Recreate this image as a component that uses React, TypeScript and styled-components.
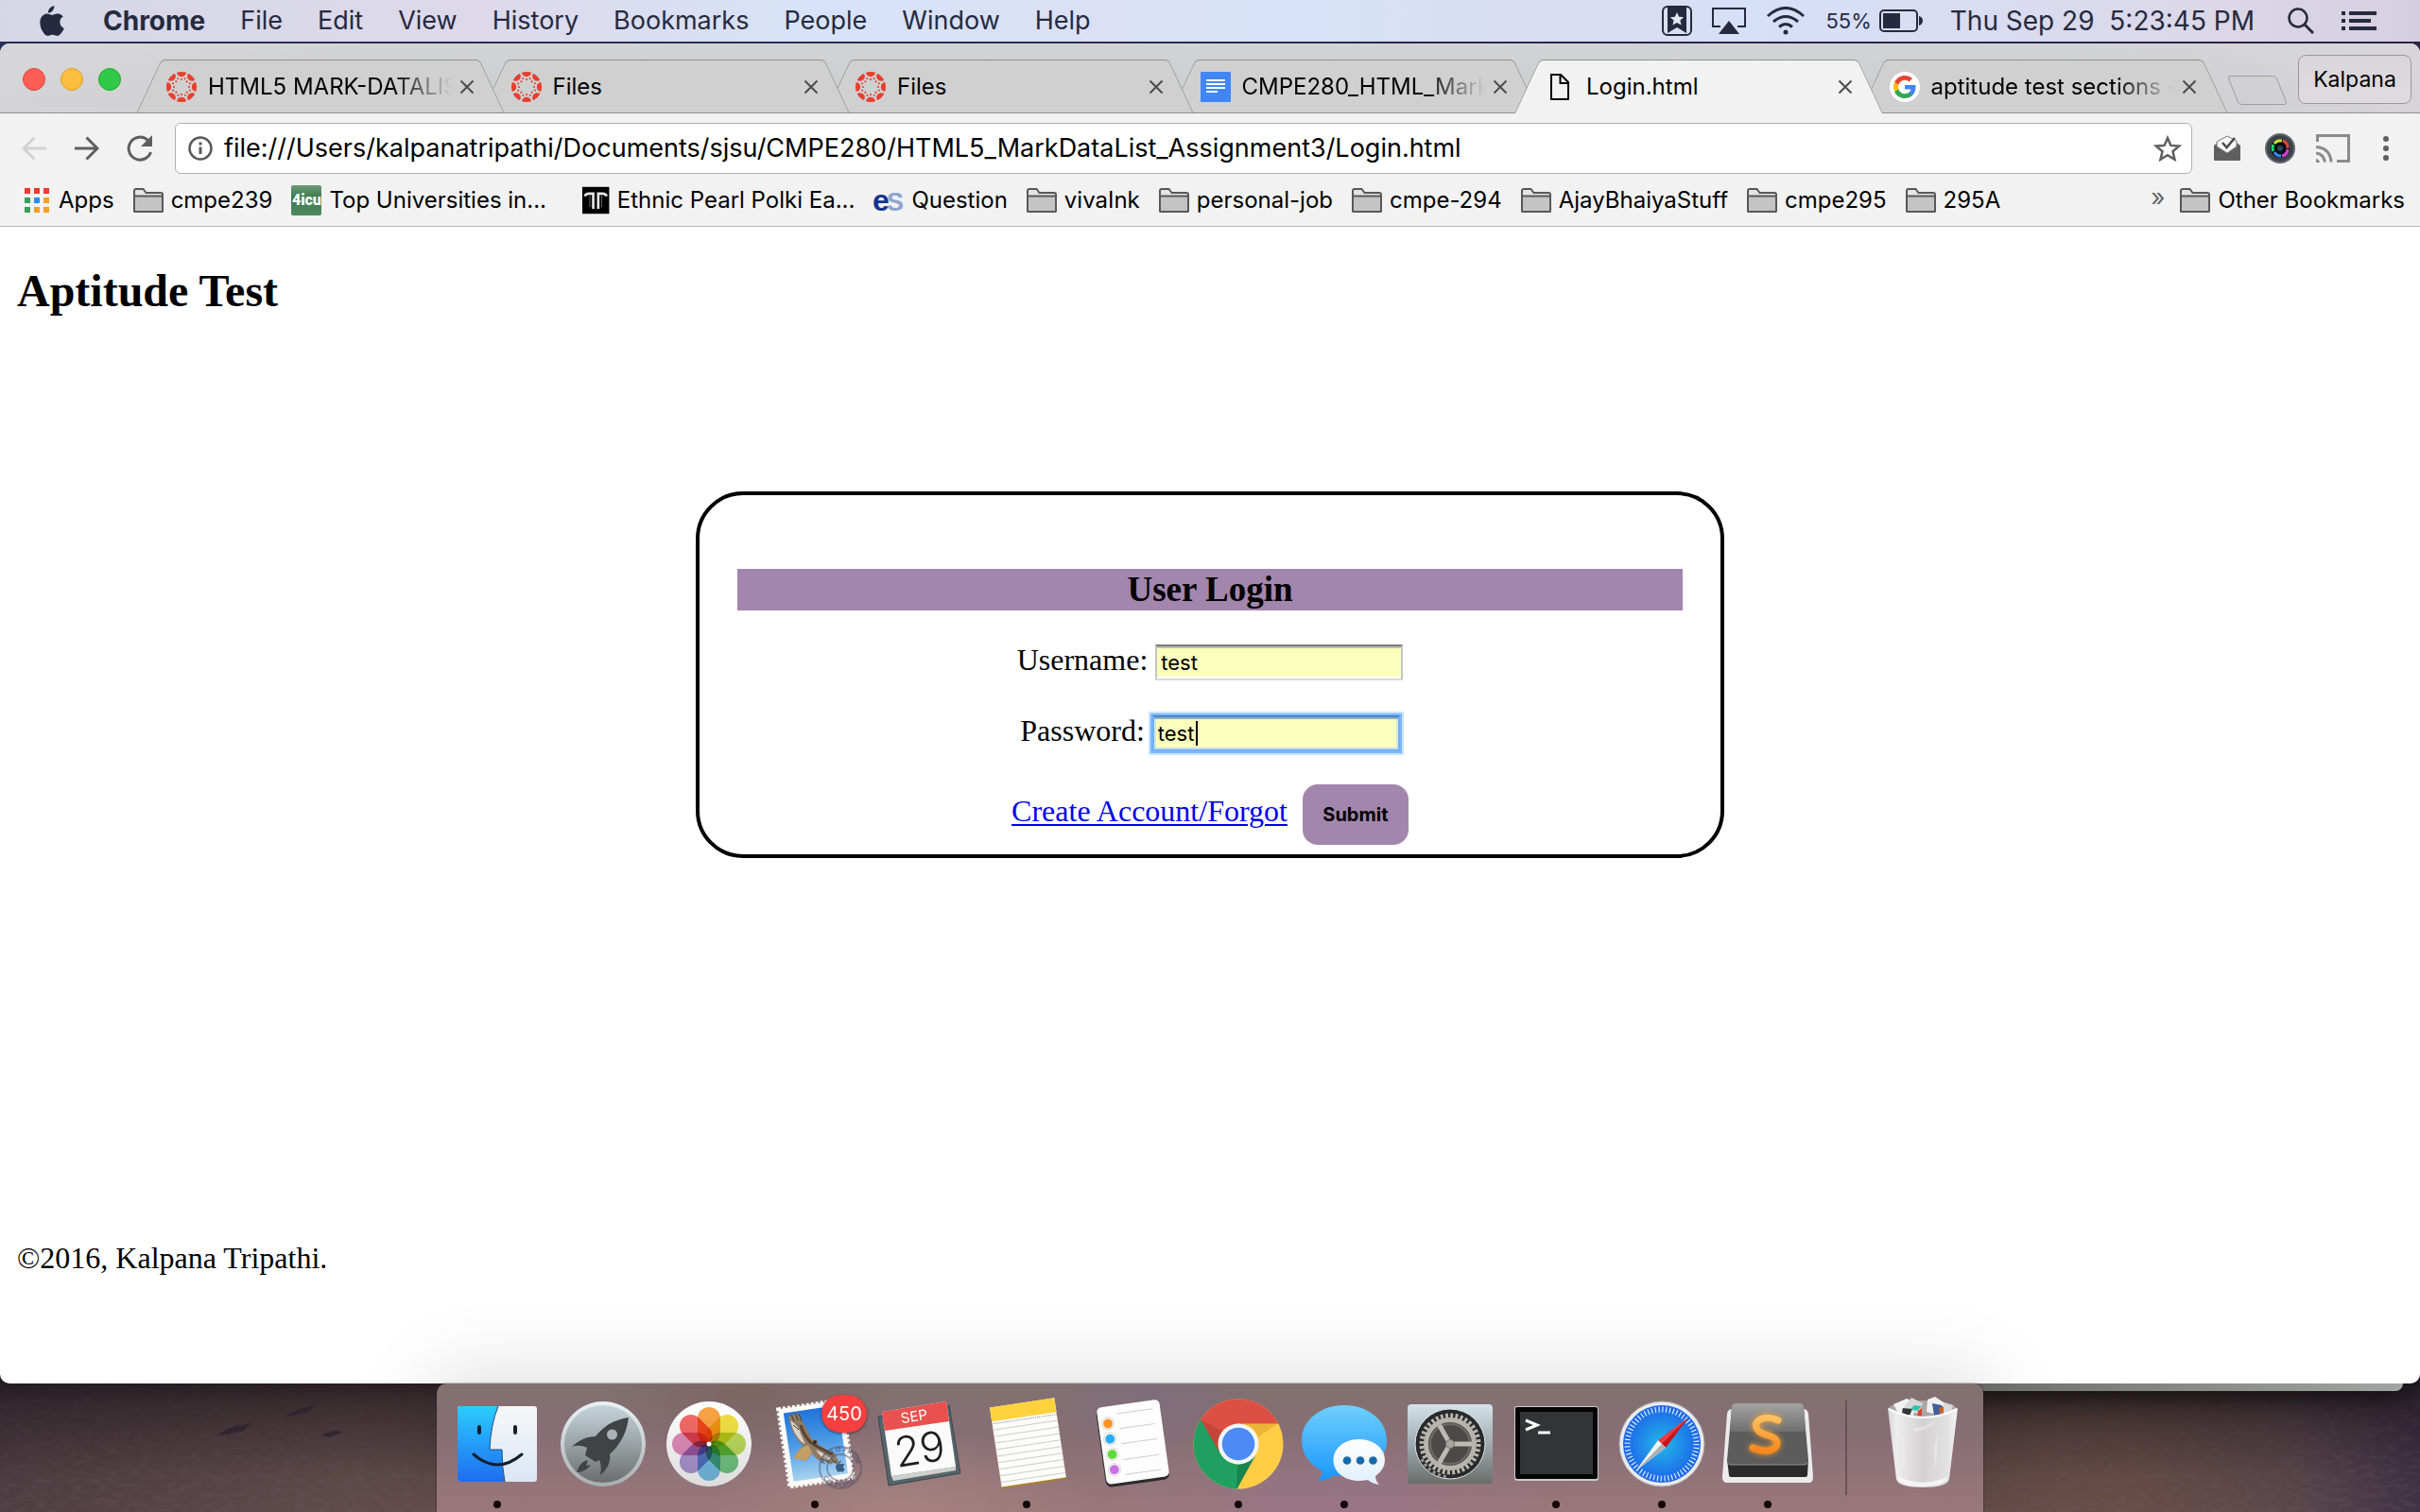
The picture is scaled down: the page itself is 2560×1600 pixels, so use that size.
import React from 'react';
import styled, { createGlobalStyle, css } from 'styled-components';

const GlobalStyle = createGlobalStyle`
  *, *::before, *::after { box-sizing: border-box; }
  body { margin: 0; background: #3b3036; }
  button, input { font-family: inherit; }
  button { padding: 0; border: 0; background: none; color: inherit; }
`;

const ui = 'Inter, "Liberation Sans", sans-serif';
const serif = '"Liberation Serif", "Times New Roman", serif';
const ink = '#262a3e';

/* ---------- desktop ---------- */

const Desktop = styled.div`
  position: relative;
  isolation: isolate;
  min-height: 100vh;
  display: grid;
  grid-template-rows: auto 1fr auto;
  overflow: hidden;
  font-family: ${ui};
  background: linear-gradient(90deg, #27305a, #2a2c54 50%, #2c2246);
`;

const Wallpaper = styled.svg`
  position: absolute;
  left: 0;
  bottom: 0;
  z-index: -1;
  width: 100%;
  height: 150px;
`;

/* ---------- menu bar ---------- */

const MenuBar = styled.header`
  display: flex;
  align-items: center;
  justify-content: space-between;
  height: 44px;
  padding: 0 46px 0 42px;
  color: ${ink};
  background: linear-gradient(90deg, #d5d7e7, #ddd9ea 20%, #d7e3f9 34%, #dbe0f5 46%, #d6e3f8 53%, #dadcf0 66%, #d6e0f8 72%, #dadbf0 84%, #dbd7e6 92%, #d6cfdf);
`;

const MenuGroup = styled.nav`
  display: flex;
  align-items: center;
  gap: 37px;
`;

const AppleButton = styled.button`
  display: flex;
  margin-right: 4px;
`;

const MenuItem = styled.button<{ $bold?: boolean }>`
  font-size: ${p => (p.$bold ? 28 : 27)}px;
  font-weight: ${p => (p.$bold ? 700 : 400)};
  line-height: 44px;
`;

const StatusGroup = styled.div`
  display: flex;
  align-items: center;
  gap: 21px;
`;

const Battery = styled.span`
  display: flex;
  align-items: center;
  gap: 8px;
  font-size: 22px;
`;

const Clock = styled.time`
  margin: 0 14px 0 8px;
  font-size: 28px;
  white-space: pre;
`;

const StatusButton = styled.button`
  display: flex;
  margin-right: 8px;
  &:last-child { margin-right: 0; }
`;

/* ---------- browser window ---------- */

const WindowArea = styled.div`
  position: relative;
  display: flex;
  margin-top: 2px;
`;

const BackWindow = styled.div`
  position: absolute;
  right: 18px;
  bottom: -8px;
  width: 60%;
  height: 40px;
  border-radius: 8px;
  background: linear-gradient(90deg, #555 30%, #6a6d6a 70%, #a2a6a2);
  box-shadow: 0 6px 30px rgba(0, 0, 0, 0.6);
`;

const Window = styled.main`
  position: relative;
  flex: 1;
  min-width: 0;
  display: flex;
  flex-direction: column;
  overflow: hidden;
  border-radius: 10px;
  background: #fff;
`;

const TabStrip = styled.div`
  position: relative;
  display: flex;
  align-items: flex-end;
  height: 74px;
  padding: 0 9px 0 24px;
  background: linear-gradient(90deg, rgba(220, 218, 220, 0.5), rgba(205, 207, 212, 0) 20%, rgba(205, 207, 212, 0) 85%, rgba(220, 216, 220, 0.6)), linear-gradient(#d2d3d6, #cbccd1);
  isolation: isolate;
  &::after {
    content: '';
    position: absolute;
    left: 0;
    right: 0;
    bottom: 0;
    z-index: 8;
    height: 1px;
    background: #8f8f8f;
  }
`;

const Lights = styled.div`
  display: flex;
  align-self: center;
  gap: 16px;
  margin: 2px 16px 0 0;
`;

const Light = styled.button<{ $fill: string; $edge: string }>`
  width: 24px;
  height: 24px;
  border-radius: 50%;
  border: 1px solid ${p => p.$edge};
  background: ${p => p.$fill};
`;

const Tabs = styled.div`
  display: flex;
  flex: 0 1 2187px;
  min-width: 0;
`;

const halfTab = css`
  content: '';
  position: absolute;
  top: 0;
  bottom: 0;
  z-index: -1;
  border-top: 1px solid #8f8f8f;
`;

const Tab = styled.div<{ $active: boolean; $order: number }>`
  position: relative;
  z-index: ${p => (p.$active ? 9 : 7 - p.$order)};
  flex: 1 1 391px;
  min-width: 0;
  height: 57px;
  margin-right: -26px;
  padding: 0 33px 0 32px;
  display: flex;
  align-items: center;
  gap: 8px;
  &::before {
    ${halfTab}
    left: 0;
    right: 50%;
    border-left: 1px solid #8f8f8f;
    border-top-left-radius: 5px;
    transform: skewX(-25deg);
    transform-origin: bottom left;
    background: ${p => (p.$active ? '#f2f2f2' : '#d0d0d0')};
  }
  &::after {
    ${halfTab}
    left: 50%;
    right: 0;
    margin-left: -1px;
    border-right: 1px solid #8f8f8f;
    border-top-right-radius: 5px;
    transform: skewX(25deg);
    transform-origin: bottom right;
    background: ${p => (p.$active ? '#f2f2f2' : '#d0d0d0')};
  }
`;

const TabTitle = styled.span<{ $fade: boolean }>`
  flex: 1;
  min-width: 0;
  margin-left: 4px;
  overflow: hidden;
  white-space: nowrap;
  font-size: 24px;
  line-height: 32px;
  ${p => p.$fade && css`mask-image: linear-gradient(90deg, #000 calc(100% - 64px), transparent);`}
`;

const CloseButton = styled.button`
  display: flex;
`;

const NewTab = styled.button`
  flex: none;
  width: 52px;
  height: 31px;
  margin: 0 12px 9px 31px;
  border: 1px solid #9c9ca0;
  border-radius: 4px;
  background: rgba(208, 208, 208, 0.5);
  transform: skewX(22deg);
`;

const Profile = styled.button`
  flex: none;
  width: 120px;
  height: 52px;
  margin: 0 0 10px auto;
  border: 1px solid #98989c;
  border-radius: 8px;
  background: linear-gradient(#d8d6da, #dedcdf);
  font-size: 23px;
`;

const Toolbar = styled.div`
  display: flex;
  align-items: center;
  height: 74px;
  padding: 0 8px;
  background: #f2f2f2;
`;

const ToolButton = styled.button`
  flex: none;
  display: flex;
  align-items: center;
  justify-content: center;
  width: 56px;
  height: 56px;
`;

const Omnibox = styled.div`
  flex: 1;
  min-width: 0;
  display: flex;
  align-items: center;
  gap: 12px;
  height: 54px;
  margin: 0 9px;
  padding: 0 10px 0 13px;
  border: 1px solid #b0b0b0;
  border-radius: 6px;
  background: #fff;
`;

const Address = styled.input`
  flex: 1;
  min-width: 0;
  padding: 0;
  border: 0;
  outline: 0;
  background: none;
  color: #000;
  font-size: 27px;
  line-height: 36px;
`;

const BookmarkBar = styled.nav`
  display: flex;
  align-items: center;
  gap: 20px;
  height: 46px;
  padding: 0 16px 9px 24px;
  background: #f2f2f2;
  border-bottom: 1px solid #b6b6b6;
`;

const Bookmark = styled.a<{ $fixed?: boolean }>`
  display: flex;
  align-items: center;
  gap: 8px;
  flex: none;
  ${p => p.$fixed && css`width: 288px;`}
  color: #000;
  font-size: 24px;
  line-height: 32px;
  white-space: nowrap;
  text-decoration: none;
`;

const MoreButton = styled.button`
  margin: 0 -4px 6px auto;
  color: #666;
  font-size: 26px;
  line-height: 26px;
`;

const TileIcon = styled.span<{ $bg: string }>`
  display: flex;
  align-items: center;
  justify-content: center;
  width: 32px;
  height: 32px;
  border-radius: 2px;
  color: #fff;
  background: ${p => p.$bg};
  font: 900 16px/32px Roboto, sans-serif;
`;

/* ---------- login page ---------- */

const Page = styled.section`
  flex: 1;
  padding: 40px 18px 0;
  font-family: ${serif};
  font-size: 32px;
  line-height: 36px;
  color: #000;
`;

const PageTitle = styled.h1`
  margin: 0;
  font-size: 48px;
  line-height: 56px;
`;

const Card = styled.form`
  max-width: 1088px;
  margin: 184px auto 0;
  padding: 78px 40px 10px;
  border: 4px solid #000;
  border-radius: 50px;
`;

const CardTitle = styled.h2`
  margin: 0 0 34px;
  background: #a386ad;
  text-align: center;
  font-size: 37px;
  line-height: 44px;
`;

const FormRow = styled.div`
  display: flex;
  justify-content: center;
  align-items: baseline;
  gap: 8px;
  margin-bottom: 35px;
`;

const ActionRow = styled(FormRow)`
  gap: 16px;
  margin-bottom: 0;
`;

const Field = styled.div`
  position: relative;
`;

const TextInput = styled.input<{ $focused?: boolean }>`
  display: block;
  width: 262px;
  height: 38px;
  padding: 0 4px;
  border: 2px solid #c6c6c6;
  border-top-color: #7a7a7a;
  border-bottom-color: #d8d8d8;
  outline: 0;
  background: #faffbd;
  box-shadow: inset 0 2px #bdbfa8, inset 0 -2px #fff;
  color: #000;
  font-family: ${ui};
  font-size: 22px;
  caret-color: transparent;
  ${p => p.$focused && css`
    border-color: #6fb1f6;
    border-top-color: #4c86c6;
    box-shadow: inset 0 2px #8fb0cc, inset 0 -2px #c5def0, inset 2px 0 #d8e8dc, inset -2px 0 #d8e8dc, 0 0 0 2px #7cb9fb, 0 0 0 4px #c9e2fe;
  `}
`;

const Caret = styled.span`
  position: absolute;
  left: 46px;
  top: 6px;
  width: 2px;
  height: 26px;
  background: #000;
`;

const AccountLink = styled.a`
  color: #0000ee;
  text-decoration: underline;
  text-decoration-thickness: 2px;
  text-underline-offset: 3px;
`;

const Submit = styled.button`
  width: 112px;
  height: 64px;
  border-radius: 16px;
  background: #a386ad;
  font-family: ${ui};
  font-size: 20px;
  font-weight: 700;
`;

const Copyright = styled.p`
  margin: 405px 0 0;
`;

/* ---------- dock ---------- */

const DockBar = styled.footer`
  display: flex;
  justify-content: center;
`;

const Dock = styled.div`
  position: relative;
  z-index: 2;
  display: flex;
  height: 136px;
  padding: 0 8px;
  border-radius: 10px 10px 0 0;
  background:
    radial-gradient(ellipse 200px 90px at 30% 100%, rgba(170, 134, 128, 0.7), transparent),
    radial-gradient(ellipse 260px 80px at 58% 95%, rgba(150, 115, 140, 0.6), transparent),
    radial-gradient(ellipse 120px 60px at 46% 10%, rgba(125, 108, 128, 0.7), transparent),
    radial-gradient(ellipse 160px 70px at 20% 10%, rgba(120, 98, 94, 0.7), transparent),
    linear-gradient(#82706f, #876e75 40%, #9a787b);
  box-shadow: 0 0 2px rgba(0, 0, 0, 0.7), 0 -6px 80px 8px rgba(0, 0, 0, 0.12);
`;

const DockItem = styled.button`
  position: relative;
  width: 112px;
  padding-top: 14px;
  display: flex;
  flex-direction: column;
  align-items: center;
  gap: 10px;
  svg { display: block; overflow: visible; }
`;

const RunningDot = styled.span`
  width: 8px;
  height: 8px;
  border-radius: 50%;
  background: #140406;
`;

const Badge = styled.span`
  position: absolute;
  left: 63px;
  top: 12px;
  width: 48px;
  height: 40px;
  border-radius: 20px;
  background: #f5403f;
  box-shadow: 0 1px 3px rgba(0, 0, 0, 0.5);
  color: #fff;
  text-align: center;
  font-size: 20px;
  line-height: 40px;
`;

const Separator = styled.span`
  width: 2px;
  margin: 18px 24px 18px 26px;
  background: #6d5054;
`;

/* ---------- small icons ---------- */

const CanvasIcon = ({ id }: { id: string }) => (
  <svg width="32" height="32" viewBox="-16 -16 32 32">
    <clipPath id={id}><circle r="16" /></clipPath>
    <g fill="#e83f2e">
      <g clipPath={`url(#${id})`}>
        {[0, 45, 90, 135, 180, 225, 270, 315].map(a => (
          <ellipse key={a} cx="0" cy="-15.6" rx="5" ry="4.8" transform={`rotate(${a})`} />
        ))}
      </g>
      {[0, 45, 90, 135, 180, 225, 270, 315].map(a => (
        <circle key={a} cy="-8" r="1.1" transform={`rotate(${a})`} />
      ))}
      {[22, 67, 112, 157, 202, 247, 292, 337].map(a => (
        <circle key={a} cy="-9.6" r="1" transform={`rotate(${a})`} />
      ))}
    </g>
  </svg>
);

const DocsIcon = () => (
  <svg width="32" height="32" viewBox="0 0 32 32">
    <rect width="32" height="32" rx="1" fill="#4285f4" />
    <path d="M6 9h20M6 13h20M6 17h20M6 21h12" stroke="#fff" strokeWidth="2" />
  </svg>
);

const PageIcon = () => (
  <svg width="32" height="32" viewBox="0 0 32 32" fill="none" stroke="#000" strokeWidth="2">
    <path d="M7 3h10l8 8v18H7zM16.500 3v9H25" />
  </svg>
);

const GoogleIcon = () => (
  <svg width="32" height="32" viewBox="0 0 32 32">
    <circle cx="16" cy="16" r="16" fill="#fff" />
    <g transform="translate(4 4)">
      <path fill="#4285f4" d="M23.500 12.300c0-.8-.1-1.600-.2-2.300H12v4.500h6.500c-.3 1.500-1.100 2.700-2.400 3.600v3h3.900c2.200-2.100 3.500-5.100 3.500-8.800z" />
      <path fill="#34a853" d="M12 24c3.200 0 6-1.100 8-2.900l-3.900-3c-1.100.7-2.500 1.200-4.100 1.200-3.100 0-5.800-2.100-6.700-5H1.200v3.100C3.300 21.300 7.300 24 12 24z" />
      <path fill="#fbbc05" d="M5.300 14.300c-.5-1.500-.5-3.100 0-4.600V6.600H1.200c-1.600 3.400-1.600 7.400 0 10.800z" />
      <path fill="#ea4335" d="M12 4.800c1.800 0 3.300.6 4.600 1.800L20 3.100C17.900 1.200 15.200 0 12 0 7.300 0 3.300 2.700 1.200 6.600l4.100 3.100c.9-2.800 3.600-4.900 6.700-4.900z" />
    </g>
  </svg>
);

const CloseIcon = () => (
  <svg width="16" height="16" viewBox="0 0 16 16" stroke="#4c4c4c" strokeWidth="2"><path d="M1.500 1.500l13 13M14.500 1.500l-13 13" /></svg>
);

const FolderIcon = () => (
  <svg width="32" height="26" viewBox="0 0 32 26" fill="#c4c4c4" stroke="#58585a" strokeWidth="2">
    <path d="M1 24V3q0-2 2-2h7.500l3 4H29q2 0 2 2v17q0 1-1 1H2q-1 0-1-1z" fill="#e4e4e4" />
    <path d="M1 8.500h30V24q0 1-1 1H2q-1 0-1-1z" />
  </svg>
);

const AppsIcon = () => (
  <svg width="30" height="26" viewBox="0 0 30 26">
    {['#f2382f', '#f2382f', '#f2382f', '#389e5b', '#2390f5', '#f3a024', '#389e5b', '#f3a024', '#f3a024'].map((c, i) => (
      <rect key={i} x={2 + (i % 3) * 10} y={Math.floor(i / 3) * 10} width="6" height="6" fill={c} />
    ))}
  </svg>
);

const EsIcon = () => (
  <svg width="32" height="32" viewBox="0 0 32 32" fontFamily="Liberation Sans" fontWeight="700">
    <text x="14" y="27" fontSize="27" fill="#8ea4cf">S</text>
    <text x="-1" y="27" fontSize="32" fill="#12348f">e</text>
  </svg>
);

const PearlIcon = () => (
  <svg width="32" height="32" viewBox="0 0 32 32" fill="none" stroke="#e6e6e6">
    <rect width="32" height="32" fill="#000" stroke="none" />
    <path d="M3 11q1-3 5-3h5v18" strokeWidth="3" />
    <path d="M29 11q-1-3-5-3h-5v18" strokeWidth="3" />
    <path d="M9 10v14M23 10v14" strokeWidth="1" stroke="#777" />
  </svg>
);

const favicons: Record<string, (key: string) => React.ReactNode> = {
  canvas: key => <CanvasIcon id={key} />,
  docs: () => <DocsIcon />,
  page: () => <PageIcon />,
  google: () => <GoogleIcon />,
};

const applePath = 'M19.700 18.600c-.8 1.200-1.700 2.400-3 2.500-1.300 0-1.700-.8-3.300-.8-1.500 0-2 .7-3.200.8-1.300 0-2.300-1.300-3.100-2.500C5.400 16.200 4.100 11.700 5.800 8.700c.9-1.500 2.400-2.400 4-2.500 1.300 0 2.500.9 3.300.9.800 0 2.300-1.100 3.800-.9.600 0 2.500.3 3.600 2-.1.100-2.200 1.200-2.100 3.800 0 3 2.700 4 2.700 4-.1.200-.4 1.400-1.400 2.600zM13.500 4.100c.7-.9 1.200-2 1.100-3.100-1.100.1-2.300.7-3.100 1.600-.6.800-1.200 1.900-1 3 1.100.1 2.300-.6 3-1.500z';

/* ---------- dock icons ---------- */

const Art = ({ children }: { children: React.ReactNode }) => (
  <svg width="100" height="100" viewBox="0 0 100 100">{children}</svg>
);

const Petal = styled.rect`
  mix-blend-mode: multiply;
`;

const GlowPath = styled.path`
  filter: drop-shadow(0 0 3px #f9a030);
`;

const Gradient = ({ id, stops }: { id: string; stops: string[] }) => (
  <linearGradient id={id} x1="0" y1="0" x2="0" y2="1">
    {stops.map((s, i) => <stop key={i} offset={i / (stops.length - 1)} stopColor={s} />)}
  </linearGradient>
);

const FinderArt = () => (
  <Art>
    <defs><Gradient id="fa" stops={['#2bcdff', '#1f6cf0']} /><Gradient id="fb" stops={['#f6f7f9', '#dbe7f3']} /></defs>
    <rect x="8" y="10" width="84" height="80" rx="3" fill="url(#fb)" />
    <path d="M11 10h40q-8 20-9 46h13q0 18 3 34H11q-3 0-3-3V13q0-3 3-3z" fill="url(#fa)" />
    <path d="M51 10q-8 20-9 46h13q0 18 3 34" fill="none" stroke="#1b4f86" strokeWidth="1" />
    <path d="M31 32v6M69 32v6" stroke="#10202f" strokeWidth="4" strokeLinecap="round" />
    <path d="M25 61q25 22 51 0" fill="none" stroke="#10202f" strokeWidth="3" strokeLinecap="round" />
  </Art>
);

const LaunchpadArt = () => (
  <Art>
    <defs><Gradient id="la" stops={['#c6d4da', '#9aa3a6', '#6b6d6c']} /><Gradient id="lb" stops={['#e9f2f6', '#a7adb0']} /></defs>
    <circle cx="50" cy="50" r="45" fill="url(#lb)" />
    <circle cx="50" cy="50" r="41" fill="url(#la)" />
    <path fill="#3f4346" d="M77 22q-22 3-35 20-14 0-25 11 8-3 16 1l-2 8 11 7 4-2q3 6 1 16 12-10 10-22Q74 46 77 22z" />
    <path fill="#3f4346" d="M34 67q-9 2-12 13 9 0 15-8l-5 1z" />
    <circle cx="59.500" cy="40" r="5.500" fill="#a9b3b7" />
  </Art>
);

const petals = ['#fba03a', '#f4e136', '#b9da52', '#6cc47c', '#70bbe9', '#a892d0', '#df86b8', '#f5625d'];

const PhotosArt = () => (
  <Art>
    <defs><Gradient id="pa" stops={['#ffffff', '#dcdcdc']} /></defs>
    <circle cx="50" cy="50" r="45" fill="url(#pa)" />
    {petals.map((c, i) => (
      <Petal key={c} x="38" y="11" width="24" height="39" rx="12" fill={c} opacity="0.940" transform={`rotate(${i * 45} 50 50)`} />
    ))}
    <circle cx="50" cy="50" r="2.500" fill="#fff" />
  </Art>
);

const MailArt = () => (
  <Art>
    <defs>
      <Gradient id="ma" stops={['#1f74da', '#4d9be6', '#a9d3f0']} />
      <path id="mtop" d="M60 75a17 17 0 0 1 34 0" />
      <path id="mbottom" d="M56 75a21 21 0 0 0 42 0" />
    </defs>
    <g transform="rotate(-8.500 50 50)">
      <rect x="17" y="8" width="68" height="83" fill="#fbfaf8" stroke="#fbfaf8" strokeWidth="4" strokeDasharray="3 2" />
      <rect x="22" y="13" width="58" height="73" fill="url(#ma)" />
    </g>
    <path fill="#8d7a64" d="M22 21l3-3 2 2 2-4 2 3 3-2q2 10 9 19l4 10 5-1 1 5q8 6 18 10l6 12-8-2-2 2-5-4-5 1q-7-4-10-9l-6 8-13-3q2-7 10-13Q26 43 22 21z" />
    <path fill="#d9d4cb" d="M24 25q9 5 12 17l4 8-4-2q-9-9-12-23zM51 56q11 5 18 11l-8-1q-6-3-10-10z" />
    <path fill="#c59d66" d="M47 59l-6 9-13-3q2-7 10-12l5-2z" />
    <path stroke="#453b32" strokeWidth="1" fill="none" d="M25 19l3 7M29 17l3 8M33 18l3 8M27 30l6 5M62 68l3 2M67 66l6 4" />
    <path stroke="#5a442e" strokeWidth="3" fill="none" d="M35 30q3 10 10 18l8 5 16 8" />
    <circle cx="50" cy="48" r="2" fill="#38291d" />
    <g fill="none" stroke="#4d4b66" strokeOpacity="0.450"><circle cx="77" cy="75" r="22" strokeWidth="2" /><circle cx="77" cy="75" r="14" strokeWidth="2" /></g>
    <g fill="#4d4b66" fillOpacity="0.700" fontSize="7" fontWeight="700" fontFamily="Liberation Sans">
      <text textAnchor="middle"><textPath href="#mtop" startOffset="50%">HELLO FROM</textPath></text>
      <text textAnchor="middle"><textPath href="#mbottom" startOffset="50%">CALIFORNIA</textPath></text>
    </g>
    <path fill="#3b5f87" transform="translate(69 67) scale(0.600)" d={applePath} />
  </Art>
);

const CalendarArt = () => (
  <Art>
    <path d="M5 21l75-12 12 72-76 13z" fill="#56646b" stroke="#39464d" strokeWidth="1" />
    <path d="M19 84l68-10v4l-66 11z" fill="#cfcfcb" />
    <path d="M9 16l68-11 10 69-68 10z" fill="#fafafa" />
    <path d="M9 16l68-11 3 21-68 10z" fill="#e8514f" />
    <g fontFamily="Inter" textAnchor="middle">
      <text x="43" y="26" fontSize="15" fill="#fff" transform="rotate(-9 43 21)">SEP</text>
      <text x="49" y="71" fontSize="44" fontWeight="300" fill="#1d1d1f" transform="rotate(-9 49 56)">29</text>
    </g>
  </Art>
);

const NotesArt = () => (
  <Art>
    <g transform="rotate(-8.500 51 49)">
      <rect x="17" y="7" width="69" height="86" fill="#a8812c" />
      <rect x="17" y="6" width="69" height="85" fill="#fcfcfa" />
      <rect x="17" y="6" width="69" height="15" fill="#fdd23c" />
      <path d="M17 23.500h69" stroke="#8c8c8c" strokeDasharray="1 1" />
      {[30, 37, 44, 51, 58, 65, 72, 79, 86].map(y => <path key={y} d={`M17 ${y}h69`} stroke="#cccccc" />)}
    </g>
  </Art>
);

const RemindersArt = () => (
  <Art>
    <g transform="rotate(-8 50 48)">
      <rect x="16" y="9" width="68" height="83" rx="6" fill="#2b2b2d" />
      <rect x="17" y="7" width="67" height="82" rx="5" fill="#fdfdfd" />
      {['#ff9326', '#27aef6', '#62d83c', '#c972e0'].map((c, i) => (
        <g key={c}>
          <circle cx="27" cy={25 + i * 16.400} r="6.500" fill="#fff" stroke="#d5d5d5" />
          <circle cx="27" cy={25 + i * 16.400} r="5" fill={c} />
        </g>
      ))}
      {[16, 32, 48, 65, 81].map(y => <path key={y} d={`M38 ${y}h38`} stroke="#cfcfcf" />)}
    </g>
  </Art>
);

const ChromeArt = () => (
  <Art>
    <clipPath id="ca"><circle cx="50" cy="50" r="47.500" /></clipPath>
    <g clipPath="url(#ca)">
      <rect width="100" height="100" fill="#ffcd46" />
      <path d="M-20 -20H120V28.500H50L31.400 60.700L10 25z" fill="#dd4f43" />
      <path d="M10.500 25L31.400 60.700Q40 71 50 71.500L68.600 60.700L47 100H-10V20z" fill="#1fa060" />
      <path d="M92 28.500H50q16 1 21 14z" fill="#c68a20" opacity="0.350" />
      <path d="M10.500 25l20 36q-4-15 5-24z" fill="#7c2a20" opacity="0.250" />
      <path d="M48 99l20-36q-8 9-19 9z" fill="#0c5c33" opacity="0.400" />
    </g>
    <circle cx="50" cy="50" r="21.500" fill="#f5f5f5" />
    <circle cx="50" cy="50" r="17.300" fill="#4c8bf5" />
  </Art>
);

const MessagesArt = () => (
  <Art>
    <defs><Gradient id="sa" stops={['#6fd0fb', '#1a96fd']} /><Gradient id="sb" stops={['#ffffff', '#dfeffa']} /></defs>
    <path fill="url(#sa)" d="M50 9c25 0 45 16 45 37S75 84 50 84q-6 0-11-1-7 6-18 6 6-5 6-10C14 72 5 61 5 46 5 25 25 9 50 9z" />
    <path fill="url(#sb)" d="M65.500 45C81 45 93 54.500 93 67q0 10-10 17 0 5 4 9-8-1-12-5-5 1-9.500 1C50 89 38.500 79.500 38.500 67S50 45 65.500 45z" />
    <g fill="#156bab"><circle cx="53" cy="67.500" r="4.300" /><circle cx="67" cy="67.500" r="4.300" /><circle cx="80.500" cy="67.500" r="4.300" /></g>
  </Art>
);

const SettingsArt = () => (
  <Art>
    <defs><Gradient id="ga" stops={['#d3e3ea', '#a0abb0', '#6b6c6a']} /></defs>
    <rect x="5" y="8" width="90" height="84" rx="4" fill="url(#ga)" />
    <circle cx="50" cy="50" r="37" fill="#29292a" stroke="#dbe7f2" strokeWidth="1" />
    <circle cx="50" cy="50" r="30" fill="none" stroke="#b7b4ae" strokeWidth="5" strokeDasharray="3 2.236" />
    <circle cx="50" cy="50" r="25.500" fill="#4b4a49" stroke="#b7b4ae" strokeWidth="5" />
    <circle cx="50" cy="50" r="21" fill="none" stroke="#6f6c68" strokeWidth="2" />
    <path d="M50 50h23M50 50L38.500 30M50 50L38.500 70" stroke="#bdbab4" strokeWidth="5" />
    <circle cx="50" cy="50" r="4.500" fill="#a8a5a0" stroke="#77736f" />
    <path d="M20 66q8 16 28 19" fill="none" stroke="#9c9994" strokeWidth="3" strokeDasharray="3 3" />
  </Art>
);

const TerminalArt = () => (
  <Art>
    <rect x="6" y="10" width="89" height="79" rx="3" fill="#c3cdd2" />
    <rect x="7" y="11" width="87" height="76" rx="2" fill="#050505" />
    <rect x="12" y="16" width="77" height="66" fill="#333435" />
    <path d="M18 25l12 5-12 5" fill="none" stroke="#fff" strokeWidth="3" />
    <path d="M31 38h13" stroke="#fff" strokeWidth="3" />
  </Art>
);

const SafariArt = () => (
  <Art>
    <defs><radialGradient id="va"><stop offset="0" stopColor="#22b9e8" /><stop offset="1" stopColor="#1c62ea" /></radialGradient></defs>
    <circle cx="50" cy="50" r="45" fill="#e9ebed" stroke="#a9a9ab" strokeWidth="1" />
    <circle cx="50" cy="50" r="41" fill="url(#va)" />
    <circle cx="50" cy="50" r="36.500" fill="none" stroke="#dff0fb" strokeWidth="6" strokeDasharray="1.200 2.623" />
    <path d="M78 22L46 46l8 8z" fill="#ee3b3b" /><path d="M78 22L54 54l-4-4z" fill="#c3161c" />
    <path d="M22 79l24-33 8 8z" fill="#f4f4f4" /><path d="M22 79l32-25-4-4z" fill="#a9b1b5" />
  </Art>
);

const SublimeArt = () => (
  <Art>
    <defs><Gradient id="ua" stops={['#a3a3a3', '#707070']} /><Gradient id="ub" stops={['#ffc162', '#f9881c']} /></defs>
    <path d="M12 13h76q4 0 5 5l5 67q0 6-5 6H7q-5 0-5-6l5-67q1-5 5-5z" fill="#ececec" />
    <path d="M7 66l2 17q0 2 3 2h76q4 0 4-2l1-17z" fill="#2b2b2b" />
    <path d="M16 7h68q4 0 4 4l5 56q0 5-4 5H11q-4 0-4-5l5-56q0-4 4-4z" fill="#5c5c5c" />
    <path d="M16 7h68q4 0 4 4l2 26H10l2-26q0-4 4-4z" fill="url(#ua)" />
    <path d="M7 69q1 3 4 3h78q3 0 4-3" fill="none" stroke="#8f8f8f" />
    <GlowPath d="M61 25q-11-5-19-1-8 5-2 12 3 3 11 5 9 3 9 8 0 6-9 8-8 1-17-3" fill="none" stroke="url(#ub)" strokeWidth="7" strokeLinecap="round" />
  </Art>
);

const TrashArt = () => (
  <Art>
    <defs>
      <linearGradient id="ta"><stop offset="0" stopColor="#d9d9da" /><stop offset="0.120" stopColor="#f3f3f4" /><stop offset="0.500" stopColor="#d6d5d6" /><stop offset="0.850" stopColor="#e6e6e7" /><stop offset="1" stopColor="#fafafa" /></linearGradient>
    </defs>
    <ellipse cx="50" cy="13" rx="36" ry="9" fill="#aba6a8" />
    <path d="M19 8l14-6 10 4-3 14-16-2z" fill="#f1f1f1" /><path d="M38 1l12 6-4 12-16-8z" fill="#d8d8d8" />
    <path d="M55 3l8-3 12 8-6 12-15-4z" fill="#efefef" /><path d="M60 7l10 2 4 9-12 2z" fill="#3f5f9b" />
    <path d="M67 12l6-2 2 8-7 1z" fill="#c6622c" /><path d="M29 12l10 1-3 7-8-3z" fill="#33333a" />
    <path d="M41 9l8 1-5 5-7-2z" fill="#2fc3ad" /><path d="M45 15l4-3v8l-5 1z" fill="#d8422e" /><path d="M72 6l10 3-3 10-7 2z" fill="#dadada" />
    <path d="M13 12q37 18 74 0l-9 75q-2 9-28 9t-28-9z" fill="url(#ta)" fillOpacity="0.960" />
    <path d="M14 13q36 18 72 0" fill="none" stroke="#fbfbfb" strokeWidth="2" />
    <path d="M24 85q26 11 52 0-2 10-26 10T24 85z" fill="#fff" opacity="0.700" />
    <path d="M40 33q16 0 24-10-4 12-24 14zM28 40q4 20 2 38M66 38q-6 20-2 38" fill="#fff" opacity="0.350" />
  </Art>
);

/* ---------- data ---------- */

const menus = ['File', 'Edit', 'View', 'History', 'Bookmarks', 'People', 'Window', 'Help'];

const tabs = [
  { icon: 'canvas', title: 'HTML5 MARK-DATALIST', fade: true },
  { icon: 'canvas', title: 'Files', fade: false },
  { icon: 'canvas', title: 'Files', fade: false },
  { icon: 'docs', title: 'CMPE280_HTML_Mark', fade: true },
  { icon: 'page', title: 'Login.html', fade: false, active: true },
  { icon: 'google', title: 'aptitude test sections -', fade: true },
];

const bookmarks: { label: string; icon: React.ReactNode; fixed?: boolean }[] = [
  { label: 'Apps', icon: <AppsIcon /> },
  { label: 'cmpe239', icon: <FolderIcon /> },
  { label: 'Top Universities in...', icon: <TileIcon $bg="linear-gradient(#6b9a76, #3f7a50 40%, #4d8a5c)">4icu</TileIcon>, fixed: true },
  { label: 'Ethnic Pearl Polki Ea...', icon: <PearlIcon />, fixed: true },
  { label: 'Question', icon: <EsIcon /> },
  { label: 'vivaInk', icon: <FolderIcon /> },
  { label: 'personal-job', icon: <FolderIcon /> },
  { label: 'cmpe-294', icon: <FolderIcon /> },
  { label: 'AjayBhaiyaStuff', icon: <FolderIcon /> },
  { label: 'cmpe295', icon: <FolderIcon /> },
  { label: '295A', icon: <FolderIcon /> },
];

const dockApps: { name: string; art: React.ReactNode; running?: boolean; badge?: string }[] = [
  { name: 'Finder', art: <FinderArt />, running: true },
  { name: 'Launchpad', art: <LaunchpadArt /> },
  { name: 'Photos', art: <PhotosArt /> },
  { name: 'Mail', art: <MailArt />, running: true, badge: '450' },
  { name: 'Calendar', art: <CalendarArt /> },
  { name: 'Notes', art: <NotesArt />, running: true },
  { name: 'Reminders', art: <RemindersArt /> },
  { name: 'Chrome', art: <ChromeArt />, running: true },
  { name: 'Messages', art: <MessagesArt />, running: true },
  { name: 'System Preferences', art: <SettingsArt /> },
  { name: 'Terminal', art: <TerminalArt />, running: true },
  { name: 'Safari', art: <SafariArt />, running: true },
  { name: 'Sublime Text', art: <SublimeArt />, running: true },
];

const SystemMenu = () => (
  <MenuBar>
    <MenuGroup>
      <AppleButton aria-label="Apple menu">
        <svg width="26" height="34" viewBox="4.800 0.500 16.500 21" fill={ink}><path d={applePath} /></svg>
      </AppleButton>
      <MenuItem $bold>Chrome</MenuItem>
      {menus.map(m => <MenuItem key={m}>{m}</MenuItem>)}
    </MenuGroup>
    <StatusGroup>
      <svg width="32" height="32" viewBox="0 0 32 32" fill={ink}>
        <rect x="1" y="1" width="30" height="30" rx="5" fill="none" stroke={ink} strokeWidth="2" />
        <path d="M6 1h20v28l-10-6-10 6z" />
        <path fill="#e3e6f4" d="M16 7l2.100 4.700 5.100.500-3.800 3.400 1.100 5L16 18l-4.500 2.600 1.100-5-3.800-3.400 5.100-.500z" />
      </svg>
      <svg width="36" height="28" viewBox="0 0 36 28" fill={ink}>
        <path d="M9 20H1V1h34v19h-8" fill="none" stroke={ink} strokeWidth="2" /><path d="M18 14l11 14H7z" />
      </svg>
      <svg width="42" height="30" viewBox="0 0 42 30" fill="none" stroke={ink} strokeWidth="3">
        <path d="M2 10q19-17 38 0M8 16q13-11 26 0M14 21.500q7-6 14 0" /><circle cx="21" cy="27" r="2.500" fill={ink} stroke="none" />
      </svg>
      <Battery>
        55%
        <svg width="46" height="24" viewBox="0 0 46 24" fill={ink}>
          <rect x="1" y="1" width="39" height="22" rx="4" fill="none" stroke={ink} strokeWidth="2" />
          <rect x="4" y="4" width="18" height="16" /><path d="M42 7q4 1 4 5t-4 5z" />
        </svg>
      </Battery>
      <Clock>Thu Sep 29  5:23:45 PM</Clock>
      <StatusButton aria-label="Spotlight">
        <svg width="28" height="28" viewBox="0 0 28 28" fill="none" stroke={ink} strokeWidth="2.500"><circle cx="11" cy="11" r="9.500" /><path d="M18 18l9 9" strokeWidth="3" /></svg>
      </StatusButton>
      <StatusButton aria-label="Notification Center">
        <svg width="37" height="20" viewBox="0 0 37 20" stroke={ink} strokeWidth="4"><path d="M0 2h4M8 2h29M0 10h4M8 10h23M0 18h4M8 18h29" /></svg>
      </StatusButton>
    </StatusGroup>
  </MenuBar>
);

const BrowserTabs = () => (
  <TabStrip>
    <Lights>
      <Light $fill="#fd5f57" $edge="#e0443e" aria-label="Close" />
      <Light $fill="#fdbe40" $edge="#dfa123" aria-label="Minimize" />
      <Light $fill="#33c948" $edge="#1aab29" aria-label="Zoom" />
    </Lights>
    <Tabs role="tablist">
      {tabs.map((t, i) => (
        <Tab key={i} role="tab" aria-selected={!!t.active} $active={!!t.active} $order={i}>
          {favicons[t.icon](`canvas${i}`)}
          <TabTitle $fade={t.fade}>{t.title}</TabTitle>
          <CloseButton aria-label="Close tab"><CloseIcon /></CloseButton>
        </Tab>
      ))}
    </Tabs>
    <NewTab aria-label="New tab" />
    <Profile>Kalpana</Profile>
  </TabStrip>
);

const BrowserToolbar = () => (
  <Toolbar>
    <ToolButton aria-label="Back">
      <svg width="26" height="26" viewBox="0 0 26 26" fill="none" stroke="#d2d2d2" strokeWidth="3"><path d="M26 13H2M13.500 1.500L2 13l11.500 11.500" /></svg>
    </ToolButton>
    <ToolButton aria-label="Forward">
      <svg width="26" height="26" viewBox="0 0 26 26" fill="none" stroke="#5f5f5f" strokeWidth="3"><path d="M0 13h24M12.500 1.500L24 13 12.500 24.500" /></svg>
    </ToolButton>
    <ToolButton aria-label="Reload">
      <svg width="28" height="28" viewBox="0 0 28 28" fill="none" stroke="#5f5f5f" strokeWidth="3"><path d="M22.500 5.500A12 12 0 1 0 25.500 18" /><path d="M27 0v12H15z" fill="#5f5f5f" stroke="none" /></svg>
    </ToolButton>
    <Omnibox>
      <svg width="26" height="26" viewBox="0 0 26 26" fill="none" stroke="#5a5a5a" strokeWidth="3"><circle cx="13" cy="13" r="11.500" strokeWidth="2.500" /><path d="M13 11.500V19M13 6.500v3" /></svg>
      <Address aria-label="Address" defaultValue="file:///Users/kalpanatripathi/Documents/sjsu/CMPE280/HTML5_MarkDataList_Assignment3/Login.html" />
      <svg width="30" height="28" viewBox="0 0 30 28" fill="none" stroke="#5f5f5f" strokeWidth="2.500"><path d="M15 3l3.400 7.900 8.600.7-6.500 5.700 2 8.400-7.500-4.500-7.500 4.500 2-8.400L3 11.600l8.600-.7z" /></svg>
    </Omnibox>
    <ToolButton aria-label="Inbox">
      <svg width="28" height="28" viewBox="0 0 28 28" fill="#5f5f5f">
        <path d="M0 11l4-3v4l10 7 10-7V8l4 3v15q0 1-1 1H1q-1 0-1-1z" />
        <path d="M3 12V7l11-6 10 5v6l-10 7z" fill="#f7f7f7" stroke="#777" />
        <path d="M9 8l4.500 5L22 3" fill="none" stroke="#4a4a4a" strokeWidth="2.500" />
      </svg>
    </ToolButton>
    <ToolButton aria-label="Camera">
      <svg width="32" height="32" viewBox="0 0 32 32" fill="none">
        <circle cx="16" cy="16" r="15" fill="#3d424a" stroke="#63686f" strokeWidth="2" /><circle cx="16" cy="16" r="10" fill="#0b0b12" />
        <path d="M9 19a7.500 7.500 0 0 1 0-7" stroke="#22d06a" strokeWidth="3" /><path d="M10 11a7.500 7.500 0 0 1 8-3" stroke="#c8e03a" strokeWidth="3" />
        <path d="M19 8a8 8 0 0 1 5 8" stroke="#e2443e" strokeWidth="3" /><path d="M24 17a8 8 0 0 1-6 7" stroke="#d63bd0" strokeWidth="3" /><path d="M17 24a8 8 0 0 1-7-4" stroke="#2f8ff0" strokeWidth="3" />
        <circle cx="16" cy="16" r="3" fill="#27485e" />
      </svg>
    </ToolButton>
    <ToolButton aria-label="Cast">
      <svg width="36" height="30" viewBox="0 0 36 30" fill="none" stroke="#8b8b8b" strokeWidth="3"><path d="M1.500 8V1.500h33v27H22" /><path d="M0 13.500q15 1 16 16M0 20q8 1 9.500 9.500" /><path d="M0 26q3 0 4 4H0z" fill="#8b8b8b" stroke="none" /></svg>
    </ToolButton>
    <ToolButton aria-label="Menu">
      <svg width="8" height="28" viewBox="0 0 8 28" fill="#5f5f5f"><circle cx="4" cy="4" r="3" /><circle cx="4" cy="14" r="3" /><circle cx="4" cy="24" r="3" /></svg>
    </ToolButton>
  </Toolbar>
);

const Bookmarks = () => (
  <BookmarkBar>
    {bookmarks.map(b => (
      <Bookmark key={b.label} href="#" $fixed={b.fixed}>{b.icon}{b.label}</Bookmark>
    ))}
    <MoreButton aria-label="More bookmarks">»</MoreButton>
    <Bookmark href="#"><FolderIcon />Other Bookmarks</Bookmark>
  </BookmarkBar>
);

const LoginPage = () => (
  <Page>
    <PageTitle>Aptitude Test</PageTitle>
    <Card onSubmit={e => e.preventDefault()}>
      <CardTitle>User Login</CardTitle>
      <FormRow>
        <label htmlFor="username">Username:</label>
        <Field><TextInput id="username" defaultValue="test" /></Field>
      </FormRow>
      <FormRow>
        <label htmlFor="password">Password:</label>
        <Field><TextInput id="password" defaultValue="test" $focused /><Caret /></Field>
      </FormRow>
      <ActionRow>
        <AccountLink href="#">Create Account/Forgot</AccountLink>
        <Submit type="submit">Submit</Submit>
      </ActionRow>
    </Card>
    <Copyright>©2016, Kalpana Tripathi.</Copyright>
  </Page>
);

const DesktopPicture = () => (
  <Wallpaper aria-hidden="true">
    <defs>
      <linearGradient id="wa">
        <stop offset="0" stopColor="#4f3e43" /><stop offset="0.180" stopColor="#654f4d" /><stop offset="0.500" stopColor="#5c4a50" />
        <stop offset="0.880" stopColor="#6a4e47" /><stop offset="0.950" stopColor="#5a474c" /><stop offset="1" stopColor="#403245" />
      </linearGradient>
      <linearGradient id="wb" x1="0" y1="0" x2="0" y2="1">
        <stop offset="0" stopColor="#0e0c10" stopOpacity="0.850" /><stop offset="0.250" stopColor="#1c161b" stopOpacity="0.550" /><stop offset="0.750" stopColor="#1c161b" stopOpacity="0.080" /><stop offset="1" stopColor="#1c161b" stopOpacity="0" />
      </linearGradient>
      <filter id="wc" x="0" y="0" width="100%" height="100%">
        <feTurbulence type="fractalNoise" baseFrequency="0.080 0.200" numOctaves="4" seed="7" />
        <feColorMatrix values="0 0 0 0 0.160  0 0 0 0 0.110  0 0 0 0 0.140  0 0 0 2.400 -1.050" />
      </filter>
    </defs>
    <rect width="100%" height="100%" fill="url(#wa)" />
    <rect width="100%" height="100%" filter="url(#wc)" opacity="0.300" />
    <rect width="100%" height="100%" fill="url(#wb)" />
    <path d="M228 70l14-9 24-5-10 9-20 3zM300 50l14-8 20-6-8 8zM340 68l16-5 6 3-14 5z" fill="#2c2231" opacity="0.800" />
  </Wallpaper>
);

export default function App() {
  return (
    <Desktop>
      <GlobalStyle />
      <DesktopPicture />
      <SystemMenu />
      <WindowArea>
        <BackWindow />
        <Window>
          <BrowserTabs />
          <BrowserToolbar />
          <Bookmarks />
          <LoginPage />
        </Window>
      </WindowArea>
      <DockBar>
        <Dock>
          {dockApps.map(a => (
            <DockItem key={a.name} aria-label={a.name}>
              {a.art}
              {a.running && <RunningDot />}
              {a.badge && <Badge>{a.badge}</Badge>}
            </DockItem>
          ))}
          <Separator />
          <DockItem aria-label="Trash"><TrashArt /></DockItem>
        </Dock>
      </DockBar>
    </Desktop>
  );
}
